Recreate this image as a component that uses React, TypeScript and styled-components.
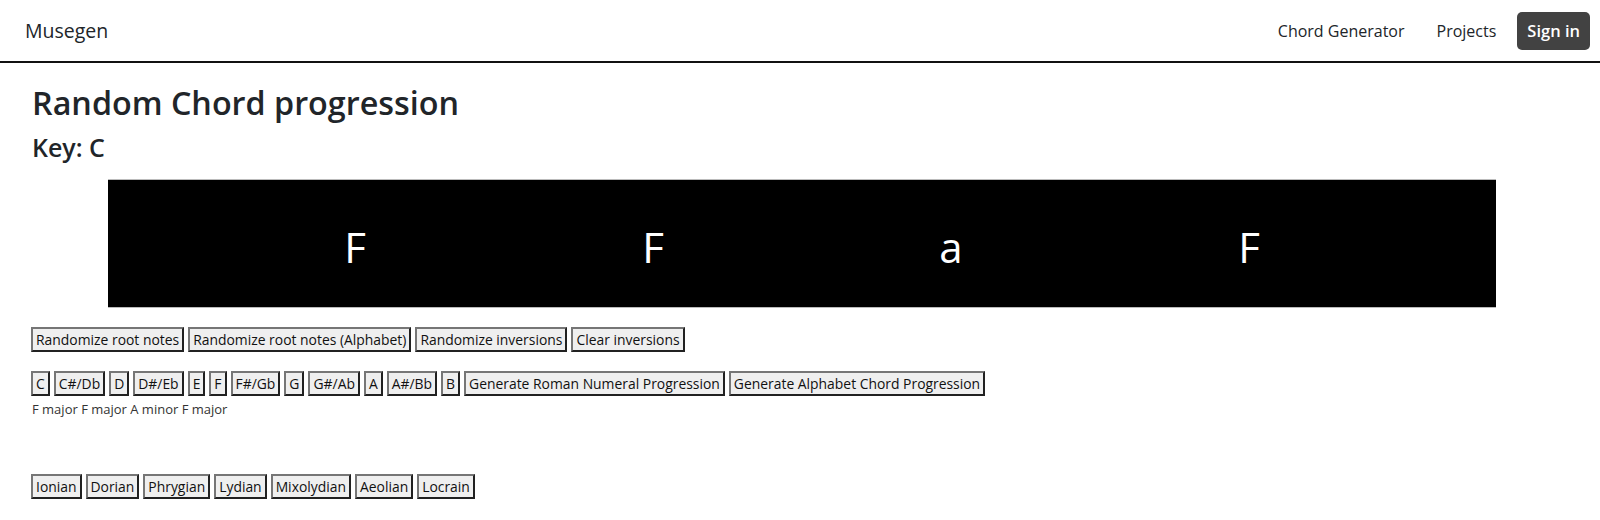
import React from "react";
import styled, { createGlobalStyle } from "styled-components";

const GlobalStyle = createGlobalStyle`
  html, body {
    margin: 0;
    padding: 0;
    background: #ffffff;
    color: #212529;
    font-family: "Open Sans", "Noto Sans", sans-serif;
  }
`;

const NavBar = styled.nav`
  height: 61px;
  border-bottom: 2px solid #111;
  display: flex;
  align-items: center;
  justify-content: space-between;
  padding: 0 10px 0 25px;
`;

const Brand = styled.a`
  font-size: 19.5px;
  color: #212529;
  text-decoration: none;
`;

const NavLinks = styled.div`
  display: flex;
  align-items: center;
`;

const NavLink = styled.a<{ $gap: number }>`
  font-size: 16px;
  color: #212529;
  text-decoration: none;
  margin-right: ${(p) => p.$gap}px;
`;

const SignIn = styled.button`
  height: 38px;
  padding: 0 10px;
  border: none;
  border-radius: 5px;
  background: #424242;
  color: #fff;
  font-family: inherit;
  font-size: 16.5px;
  font-weight: 600;
`;

const Main = styled.main`
  padding: 0 32px;
`;

const Title = styled.h1`
  margin: 20px 0 0;
  font-size: 32.3px;
  line-height: 1.2;
  font-weight: 600;
`;

const KeyTitle = styled.h2`
  margin: 10px 0 0;
  font-size: 25px;
  line-height: 1.2;
  font-weight: 600;
`;

const ChordBox = styled.div`
  width: 1388px;
  height: 127px;
  margin: 17px 0 0 76px;
  background: #000;
  border-top: 1px solid #bbb;
  border-bottom: 1px solid #bbb;
  display: flex;
  justify-content: center;
  align-items: center;
`;

const Chord = styled.div`
  width: 298px;
  text-align: center;
  color: #fff;
  font-size: 42px;
  padding-top: 6px;
`;

const ButtonRow = styled.div<{ $top: number }>`
  display: flex;
  gap: 4px;
  margin-top: ${(p) => p.$top}px;
  margin-left: -1px;
`;

const PlainButton = styled.button`
  font-family: inherit;
  font-size: 13.9px;
  line-height: 17px;
  color: #111;
  background: #efefef;
  padding: 2px 3px;
  border: 2px outset #767676;
  border-radius: 0;
`;

const Summary = styled.div`
  font-size: 13px;
  line-height: 18px;
  color: #333;
  margin-top: 4px;
`;

const chords = ["F", "F", "a", "F"];
const actions = [
  "Randomize root notes",
  "Randomize root notes (Alphabet)",
  "Randomize inversions",
  "Clear inversions",
];
const keys = ["C", "C#/Db", "D", "D#/Eb", "E", "F", "F#/Gb", "G", "G#/Ab", "A", "A#/Bb", "B"];
const generators = ["Generate Roman Numeral Progression", "Generate Alphabet Chord Progression"];
const modes = ["Ionian", "Dorian", "Phrygian", "Lydian", "Mixolydian", "Aeolian", "Locrain"];

export default function App() {
  return (
    <>
      <GlobalStyle />
      <NavBar>
        <Brand href="#">Musegen</Brand>
        <NavLinks>
          <NavLink href="#" $gap={32}>Chord Generator</NavLink>
          <NavLink href="#" $gap={21}>Projects</NavLink>
          <SignIn>Sign in</SignIn>
        </NavLinks>
      </NavBar>
      <Main>
        <Title>Random Chord progression</Title>
        <KeyTitle>Key: C</KeyTitle>
        <ChordBox>
          {chords.map((c, i) => (
            <Chord key={i}>{c}</Chord>
          ))}
        </ChordBox>
        <ButtonRow $top={19}>
          {actions.map((a) => (
            <PlainButton key={a}>{a}</PlainButton>
          ))}
        </ButtonRow>
        <ButtonRow $top={19}>
          {keys.map((k) => (
            <PlainButton key={k}>{k}</PlainButton>
          ))}
          {generators.map((g) => (
            <PlainButton key={g}>{g}</PlainButton>
          ))}
        </ButtonRow>
        <Summary>F major F major A minor F major</Summary>
        <ButtonRow $top={56}>
          {modes.map((m) => (
            <PlainButton key={m}>{m}</PlainButton>
          ))}
        </ButtonRow>
      </Main>
    </>
  );
}
